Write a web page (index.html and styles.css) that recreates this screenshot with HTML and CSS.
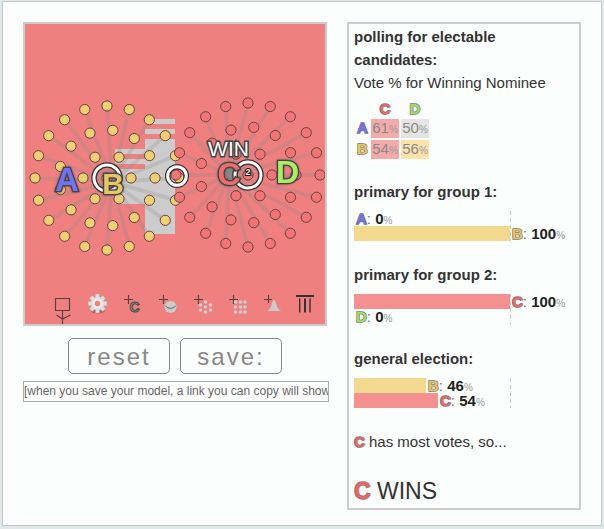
FILE: index.html
```html
<!DOCTYPE html>
<html lang="en">
<head>
<meta charset="utf-8">
<title>Election model</title>
<link rel="stylesheet" href="styles.css">
</head>
<body>
<main class="sandbox">
  <section class="model">
    <svg class="arena" viewBox="25 24 300 300" width="300" height="300">
      <g class="block">
        <path d="M145 119h30v5h-30zM145 129h30v5h-30zM115 149h30v5h-30zM115 159h30v5h-30zM145 139h30v95h-30v-30h-30v-35h30z"/>
      </g>
      <g id="links" class="links"></g>
      <g id="voters" class="voters"></g>
      <path class="smudge" d="M225 168l6 1 4 4-3 6-7-2z"/>
      <path class="spark" d="M234 170v8M234 172l4-1"/>
      <g class="ring">
        <circle class="ring-dark" cx="107" cy="178" r="13"/><circle class="ring-light" cx="107" cy="178" r="13"/>
        <circle class="ring-dark" cx="177" cy="176" r="9.3"/><circle class="ring-light" cx="177" cy="176" r="9.3"/>
        <circle class="ring-dark" cx="248" cy="175" r="13"/><circle class="ring-light" cx="248" cy="175" r="13"/>
      </g>
      <text class="mini" x="248" y="175">2</text>
      <g class="runner">
        <text class="a" x="67" y="190.500" font-size="33">A</text>
        <text class="b" x="113" y="194" font-size="30">B</text>
        <text class="c" x="229" y="184.500" font-size="32">C</text>
        <text class="d" x="287.500" y="182.500" font-size="32">D</text>
      </g>
      <text class="win" x="228.500" y="156">WIN</text>
      <g class="tool">
        <path d="M55.500 298.500h14v12h-14zM62.500 311v13M56.500 315l6 4 8-4"/>
        <path d="M124 299.500h9M128.500 295v9M159 299.500h9M163.500 295v9M194 299.500h9M198.500 295v9M229 299.500h9M233.500 295v9M264 299.500h8M268.500 295v8"/>
      </g>
      <ellipse class="gear-shade" cx="98" cy="311" rx="7" ry="2.500"/>
      <g class="gear" transform="translate(97.500 303.500)">
        <path id="gear"/>
        <circle r="4" class="gear-rim"/>
      </g>
      <text class="tool-c" x="134.500" y="312">C</text>
      <circle class="pale" cx="170.500" cy="307" r="6"/>
      <path class="face" d="M165.500 306l2 1.500M175.500 306l-2 1.500M167.500 307.500q3 2 6 0"/>
      <g class="pale">
        <circle cx="205.500" cy="302" r="1.800"/><circle cx="200.500" cy="305" r="1.800"/><circle cx="210.500" cy="305" r="1.800"/>
        <circle cx="205.500" cy="307" r="1.800"/><circle cx="200.500" cy="310" r="1.800"/><circle cx="210.500" cy="310" r="1.800"/><circle cx="205.500" cy="312" r="1.800"/>
        <circle cx="235.500" cy="302" r="1.800"/><circle cx="240.500" cy="302" r="1.800"/><circle cx="245" cy="302" r="1.800"/>
        <circle cx="235.500" cy="307" r="1.800"/><circle cx="240.500" cy="307" r="1.800"/><circle cx="245" cy="307" r="1.800"/>
        <circle cx="235.500" cy="312" r="1.800"/><circle cx="240.500" cy="312" r="1.800"/><circle cx="245" cy="312" r="1.800"/>
        <path d="M267 311q3-1 4.500-6 1.500-5 2.500-5t2.500 5q1.500 5 4.500 6z"/>
      </g>
      <path class="bin" d="M296 295h18v2h-18zM299 298.500h1.400v14h-1.400zM304 298.500h2v14h-2zM309.300 298.500h1.400v14h-1.400z"/>
    </svg>
    <div class="buttons">
      <button class="button" type="button">reset</button>
      <button class="button" type="button">save:</button>
    </div>
    <div class="link">[when you save your model, a link you can copy will show up here]</div>
  </section>

  <section class="results">
    <h2>polling for electable candidates:</h2>
    <p>Vote % for Winning Nominee</p>
    <div class="poll">
      <span></span><b class="name c">C</b><b class="name d">D</b>
      <b class="name a">A</b><span class="cell red">61<small>%</small></span><span class="cell">50<small>%</small></span>
      <b class="name b">B</b><span class="cell red">54<small>%</small></span><span class="cell gold">56<small>%</small></span>
    </div>

    <h2>primary for group 1:</h2>
    <div class="chart">
      <div class="row"><i class="bar none"></i><span><b class="name a">A</b>: <b>0</b><small>%</small></span></div>
      <div class="row"><i class="bar gold full"></i><span><b class="name b">B</b>: <b>100</b><small>%</small></span></div>
    </div>

    <h2>primary for group 2:</h2>
    <div class="chart second">
      <div class="row"><i class="bar red full"></i><span><b class="name c">C</b>: <b>100</b><small>%</small></span></div>
      <div class="row"><i class="bar none"></i><span><b class="name d">D</b>: <b>0</b><small>%</small></span></div>
    </div>

    <h2>general election:</h2>
    <div class="chart">
      <div class="row"><i class="bar gold" style="width:72px"></i><span><b class="name b">B</b>: <b>46</b><small>%</small></span></div>
      <div class="row"><i class="bar red" style="width:84px"></i><span><b class="name c">C</b>: <b>54</b><small>%</small></span></div>
    </div>

    <p class="verdict"><b class="name c">C</b> has most votes, so...</p>
    <p class="winner"><b class="name c">C</b> WINS</p>
  </section>
</main>
<script src="model.js"></script>
</body>
</html>
```

FILE: styles.css
```css
* { box-sizing: border-box; }
body { margin: 0; padding: 1px 2px; height: 529px; overflow: hidden; background: #dfe9e9; color: #333; font: 15px/23px "Liberation Sans", Arial, sans-serif; }
.sandbox { width: 600px; height: 525px; padding: 20px; display: flex; gap: 18px; border: 1px solid #c4caca; background: #fcfefd; }
.model { width: 306px; flex: none; }
.arena { display: block; box-sizing: content-box; border: 2px solid #ccc; background: #f08080; }
.block, .pale { fill: #ccc; }
.smudge { fill: #888; }
.spark { fill: none; stroke: #fff; stroke-width: 1.500; }
.links line { stroke: #8c8c8c; stroke-opacity: .24; stroke-width: 4; }
.voters circle { stroke: #6a4040; stroke-width: 1; }
.voters .one { fill: #f0d073; }
.voters .two { fill: #f27474; }
.ring { fill: none; }
.ring-dark { stroke: #333; stroke-width: 5.500; }
.ring-light { stroke: #fff; stroke-width: 3; }
.runner text { font-weight: bold; text-anchor: middle; stroke: #444; stroke-width: 2.600; paint-order: stroke; filter: drop-shadow(0 0 1px rgba(68, 68, 68, .7)); }
.runner .a { fill: #7272f2; }
.runner .b { fill: #e8c766; }
.runner .c { fill: #ee6c6c; }
.runner .d { fill: #aaee66; }
.win { font-size: 21px; text-anchor: middle; fill: #fff; stroke: #444; stroke-width: 3; paint-order: stroke; }
.mini { font-size: 9px; font-weight: bold; text-anchor: middle; fill: #fff; stroke: #111; stroke-width: 2; paint-order: stroke; }
.tool { fill: none; stroke: #584040; stroke-width: 1.200; }
.tool-c { font-size: 14px; font-weight: bold; text-anchor: middle; fill: #999; stroke: #444; stroke-width: 1; }
.gear { fill: #dedede; stroke: #aaa; stroke-width: .4; }
.gear-rim { fill: #f08080; stroke: #ececec; stroke-width: 2.500; }
.gear-shade { fill: #b85e5e; }
.face { fill: none; stroke: #555; stroke-width: .9; }
.bin { fill: #333; }
.buttons { display: flex; gap: 10px; padding: 12px 0 7px 45px; }
.button { width: 102px; height: 36px; padding: 0; border: 1px solid #888; border-radius: 5px; background: #fcfefd; color: #888; font: 24px/35px "Liberation Sans", Arial, sans-serif; letter-spacing: 2px; }
.link { height: 21px; border: 1px solid #aaa; background: #fff; color: #666; font-size: 12px; line-height: 18px; white-space: nowrap; overflow: hidden; }
.results { width: 234px; height: 488px; padding: 1px 5px; border: 2px solid #ccc; }
h2, p { margin: 0; font-size: 15px; line-height: 23px; }
h2 { width: 190px; }
small { color: #999; font-size: 10px; }
.name { -webkit-text-stroke: 1.400px rgba(60, 60, 60, .7); paint-order: stroke; }
.name.a { color: #7070ee; }
.name.b { color: #e8c55c; }
.name.c { color: #f06464; }
.name.d { color: #9cdf62; }
.poll { display: grid; grid-template: 17px 19px 19px / 13px 28px 28px; gap: 2px; width: 73px; margin: 6px 0 21px 2px; text-align: center; line-height: 18px; }
.cell { background: #e5e5e5; color: #888; line-height: 18px; white-space: nowrap; }
.cell.red { background: #f5aaaa; }
.cell.gold { background: #fbe3aa; }
.chart { width: 157px; height: 30px; margin: 8px 0 22px; background: repeating-linear-gradient(#ccc 0 4px, transparent 4px 7px) right / 1px 100% no-repeat; }
.chart.second { margin-bottom: 23px; }
.verdict { margin-bottom: 27px; }
.row { display: flex; height: 15px; gap: 2px; line-height: 16px; white-space: nowrap; color: #777; }
.row b:not(.name) { color: #222; }
.bar { flex: none; height: 15px; }
.bar.gold { background: #f2d98f; }
.bar.red { background: #f49090; }
.bar.full { width: 156px; }
.bar.none { width: 0; }
.winner { font-size: 23px; }
```

FILE: model.js
```js
const NS = "http://www.w3.org/2000/svg";

function add(parent, tag, attrs) {
  const el = document.createElementNS(NS, tag);
  for (const key in attrs) el.setAttribute(key, attrs[key]);
  parent.appendChild(el);
}

// Voters stand in rings of 1, 6, 13 and 20 around the group centre.
function crowd(cx, cy, kind, tx, ty) {
  [[0, 1], [24, 6], [48, 13], [72, 20]].forEach(([r, n]) => {
    for (let i = 0; i < n; i++) {
      const t = i / n * Math.PI * 2;
      const x = cx + r * Math.cos(t), y = cy + r * Math.sin(t);
      if (r === 72) add(document.getElementById("links"), "line", { x1: x, y1: y, x2: tx, y2: ty });
      add(document.getElementById("voters"), "circle", { cx: x, cy: y, r: 5.1, class: kind });
    }
  });
}
crowd(107, 178, "one", 112, 182);
crowd(248, 175, "two", 229, 175);

const teeth = [];
for (let i = 0; i < 8; i++) {
  [[-.32, 6.8], [-.2, 9.6], [.2, 9.6], [.32, 6.8]].forEach(([d, r]) => {
    const t = i * Math.PI / 4 + d;
    teeth.push((r * Math.cos(t)).toFixed(2) + " " + (r * Math.sin(t)).toFixed(2));
  });
}
document.getElementById("gear").setAttribute("d", "M" + teeth.join("L") + "z");
```
